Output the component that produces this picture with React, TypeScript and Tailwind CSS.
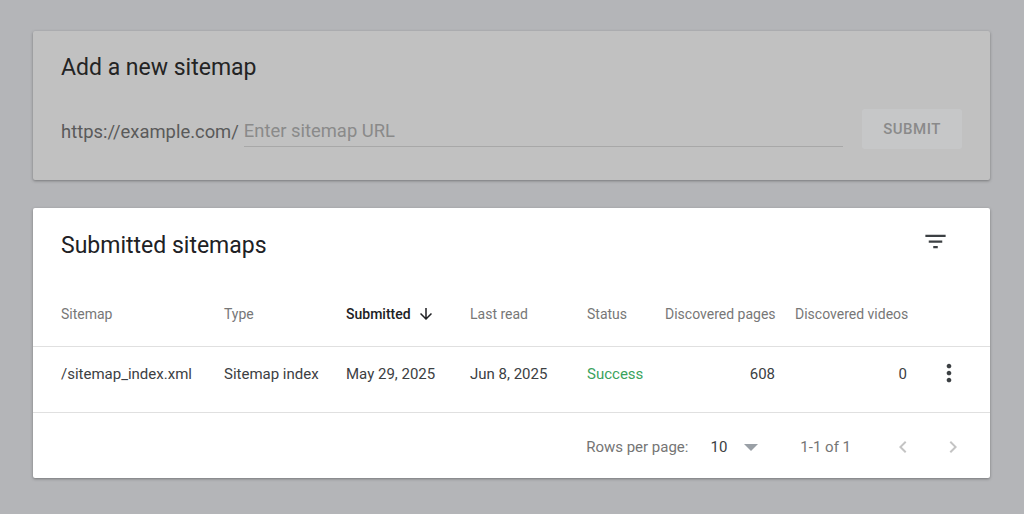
import React from "react";

const FilterIcon = () => (
  <svg width="27" height="27" viewBox="0 0 24 24" fill="#3c4043">
    <path d="M10 18h4v-2h-4v2zM3 6v2h18V6H3zm3 7h12v-2H6v2z" />
  </svg>
);

const ArrowDown = () => (
  <svg width="18" height="18" viewBox="0 0 24 24" fill="#202124">
    <path d="M20 12l-1.41-1.41L13 16.17V4h-2v12.17l-5.58-5.59L4 12l8 8 8-8z" />
  </svg>
);

const MoreVert = () => (
  <svg width="28" height="28" viewBox="0 0 24 24" fill="#3c4043">
    <path d="M12 8c1.1 0 2-.9 2-2s-.9-2-2-2-2 .9-2 2 .9 2 2 2zm0 2c-1.1 0-2 .9-2 2s.9 2 2 2 2-.9 2-2-.9-2-2-2zm0 6c-1.1 0-2 .9-2 2s.9 2 2 2 2-.9 2-2-.9-2-2-2z" />
  </svg>
);

const ChevLeft = () => (
  <svg width="24" height="24" viewBox="0 0 24 24" fill="#c4c4c4">
    <path d="M15.41 7.41L14 6l-6 6 6 6 1.41-1.41L10.83 12z" />
  </svg>
);

const ChevRight = () => (
  <svg width="24" height="24" viewBox="0 0 24 24" fill="#c4c4c4">
    <path d="M10 6L8.59 7.41 13.17 12l-4.58 4.59L10 18l6-6z" />
  </svg>
);

const DropTri = () => (
  <svg width="14" height="7" viewBox="0 0 14 7" fill="#9aa0a6">
    <path d="M0 0h14L7 7z" />
  </svg>
);

const cols = "grid grid-cols-[163px_122px_124px_117px_78px_110px_20px_112px_1fr] pl-[28px]";

export default function App() {
  return (
    <div
      className="w-full h-[514px] bg-[#b4b5b8] pt-[31px] px-[33px] pr-[34px] overflow-hidden"
      style={{ fontFamily: "Roboto, 'Liberation Sans', Arial, sans-serif" }}
    >
      {/* Add a new sitemap */}
      <div className="w-[957px] h-[149px] bg-[#c1c1c1] shadow-[0_1px_3px_rgba(0,0,0,0.35)] rounded-[2px] px-[28px] pt-[22px]">
        <div className="text-[23px] leading-[29px] text-[#242424]">Add a new sitemap</div>
        <div className="flex items-start mt-[27px]">
          <div className="flex items-end h-[38px] flex-1">
            <span className="text-[18.4px] leading-6 pb-[3px] text-[#5a5a5a] pr-[5px]">https://example.com/</span>
            <div className="flex-1 h-full flex items-end pb-[3px] border-b border-[#a8a8a8]">
              <span className="text-[18.4px] leading-6 text-[#8a8a8a]">Enter sitemap URL</span>
            </div>
          </div>
          <div className="ml-[19px] w-[100px] h-[40px] rounded-[3px] bg-[#c6c7c8] flex items-center justify-center text-[15px] font-medium tracking-[0.5px] text-[#8a8a8a]">
            SUBMIT
          </div>
        </div>
      </div>

      {/* Submitted sitemaps */}
      <div className="w-[957px] h-[270px] mt-[28px] bg-white shadow-[0_1px_3px_rgba(0,0,0,0.35)] rounded-[2px] flex flex-col">
        <div className="h-[74px] flex items-center justify-between pl-[28px] pr-[41px]">
          <div className="text-[23px] leading-[29px] text-[#202124]">Submitted sitemaps</div>
          <div className="-mt-[8px]">
            <FilterIcon />
          </div>
        </div>
        <div className={`${cols} h-[65px] items-center text-[14px] text-[#777777] border-b border-[#e0e0e0]`}>
          <div>Sitemap</div>
          <div>Type</div>
          <div className="flex items-center text-[#202124] font-medium">
            Submitted
            <span className="ml-[6px] flex">
              <ArrowDown />
            </span>
          </div>
          <div>Last read</div>
          <div>Status</div>
          <div className="text-right whitespace-nowrap">Discovered pages</div>
          <div />
          <div className="text-right whitespace-nowrap">Discovered videos</div>
          <div />
        </div>
        <div className={`${cols} h-[66px] items-start pt-[17px] text-[15px] leading-5 text-[#3c4043] border-b border-[#e0e0e0]`}>
          <div>/sitemap_index.xml</div>
          <div>Sitemap index</div>
          <div>May 29, 2025</div>
          <div>Jun 8, 2025</div>
          <div className="text-[#3aa35c]">Success</div>
          <div className="text-right">608</div>
          <div />
          <div className="text-right">0</div>
          <div className="flex justify-center -mt-[5px]">
            <MoreVert />
          </div>
        </div>
        <div className="flex-1 flex items-center justify-end pt-[3px] pr-[25px] text-[15px] text-[#757575]">
          <span>Rows per page:</span>
          <span className="ml-[22px] text-[#3c4043]">10</span>
          <span className="ml-[17px] flex">
            <DropTri />
          </span>
          <span className="ml-[42px]">1-1 of 1</span>
          <span className="ml-[40px] flex">
            <ChevLeft />
          </span>
          <span className="ml-[26px] flex">
            <ChevRight />
          </span>
        </div>
      </div>
    </div>
  );
}
